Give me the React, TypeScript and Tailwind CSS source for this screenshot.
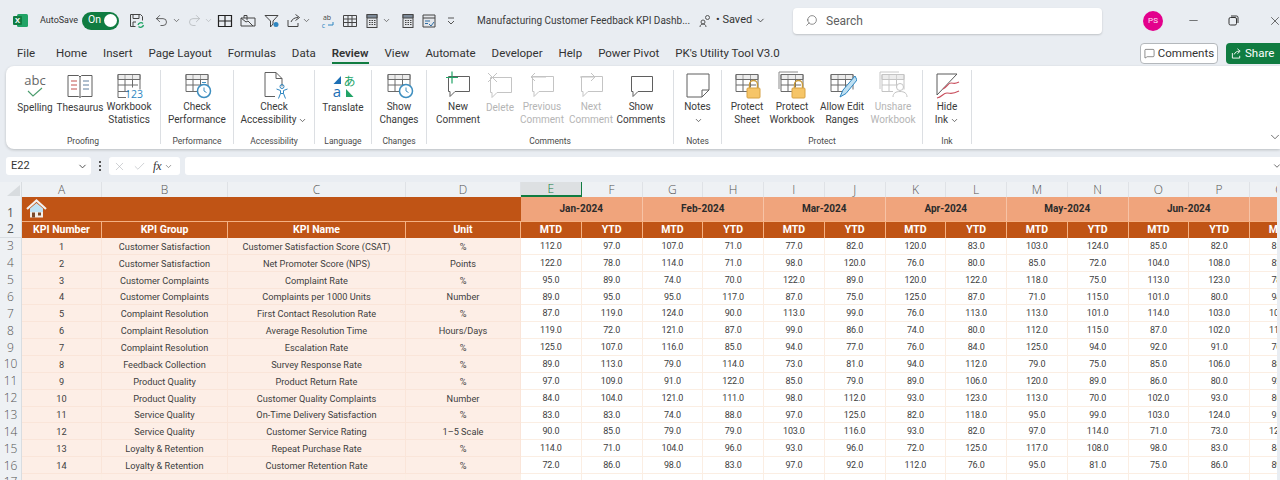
import React from 'react';
import { ChevronDown, Search, Minus, X, Undo2, Redo2, Check, MessageSquare } from 'lucide-react';

const kpis: [number, string, string, string, number[]][] = [
  [1, 'Customer Satisfaction', 'Customer Satisfaction Score (CSAT)', '%', [112, 97, 107, 71, 77, 82, 120, 83, 103, 124, 85, 82, 85]],
  [2, 'Customer Satisfaction', 'Net Promoter Score (NPS)', 'Points', [122, 78, 114, 71, 98, 120, 76, 80, 85, 72, 104, 108, 82]],
  [3, 'Customer Complaints', 'Complaint Rate', '%', [95, 89, 74, 70, 122, 89, 120, 122, 118, 75, 113, 123, 78]],
  [4, 'Customer Complaints', 'Complaints per 1000 Units', 'Number', [89, 95, 95, 117, 87, 75, 125, 87, 71, 115, 101, 80, 94]],
  [5, 'Complaint Resolution', 'First Contact Resolution Rate', '%', [87, 119, 124, 90, 113, 99, 76, 113, 113, 101, 114, 103, 105]],
  [6, 'Complaint Resolution', 'Average Resolution Time', 'Hours/Days', [119, 72, 121, 87, 99, 86, 74, 80, 112, 115, 87, 102, 110]],
  [7, 'Complaint Resolution', 'Escalation Rate', '%', [125, 107, 116, 85, 94, 77, 76, 84, 125, 94, 92, 91, 76]],
  [8, 'Feedback Collection', 'Survey Response Rate', '%', [89, 113, 79, 114, 73, 81, 94, 112, 79, 75, 85, 106, 88]],
  [9, 'Product Quality', 'Product Return Rate', '%', [97, 109, 91, 122, 85, 79, 89, 106, 120, 89, 86, 80, 92]],
  [10, 'Product Quality', 'Customer Quality Complaints', 'Number', [84, 104, 121, 111, 98, 112, 93, 123, 113, 70, 102, 93, 86]],
  [11, 'Service Quality', 'On-Time Delivery Satisfaction', '%', [83, 83, 74, 88, 97, 125, 82, 118, 95, 99, 103, 124, 95]],
  [12, 'Service Quality', 'Customer Service Rating', '1–5 Scale', [90, 85, 79, 79, 103, 116, 93, 82, 97, 114, 71, 73, 120]],
  [13, 'Loyalty & Retention', 'Repeat Purchase Rate', '%', [114, 71, 104, 96, 93, 96, 72, 125, 117, 108, 98, 83, 84]],
  [14, 'Loyalty & Retention', 'Customer Retention Rate', '%', [72, 86, 98, 83, 97, 92, 112, 76, 95, 81, 75, 86, 89]],
];

const letters = ['A', 'B', 'C', 'D', 'E', 'F', 'G', 'H', 'I', 'J', 'K', 'L', 'M', 'N', 'O', 'P', 'Q'];
const months = ['Jan-2024', 'Feb-2024', 'Mar-2024', 'Apr-2024', 'May-2024', 'Jun-2024'];

const Svg = ({ children, size = 30 }: { children: React.ReactNode; size?: number }) => (
  <svg width={size} height={size} viewBox="0 0 30 30" fill="none" stroke="#5f5f5f" strokeWidth="1">
    {children}
  </svg>
);

// little spreadsheet used by most of the ribbon icons
const Sheet = ({ c = '#6b6b6b' }: { c?: string }) => (
  <g stroke={c}>
    <path d="M4 4.500h22v15M4 4.500v17h11" />
    <path d="M4 9.500h22M4 15h20M11 4.500v17M18.500 4.500v13" />
    <path d="M4 4.500h22v5H4z" fill="#d9d9d9" fillOpacity=".5" />
  </g>
);

const Bubble = ({ c = '#5f5f5f' }: { c?: string }) => (
  <path d="M5.500 6.500h21v15H12l-5 5v-5H5.500z" stroke={c} fill="none" />
);

const Lock = () => (
  <g>
    <path d="M17.500 18v-3.500a4 4 0 0 1 8 0V18" stroke="#c99a3a" strokeWidth="1.400" />
    <rect x="15" y="18" width="13" height="10" rx="1" fill="#f6c567" stroke="#d7a244" />
  </g>
);

const Clock = () => (
  <g>
    <circle cx="22" cy="21" r="6.500" fill="#fff" stroke="#3e8ebf" strokeWidth="1.500" />
    <path d="M22 17.500V21l2.500 1.500" stroke="#3e8ebf" />
  </g>
);

const ribbonIcons: Record<string, React.ReactNode> = {
  spelling: (
    <Svg>
      <text x="15" y="14" textAnchor="middle" fontSize="13" fill="#666" stroke="none" fontFamily="Open Sans, sans-serif">abc</text>
      <path d="M8 20l5 5 9-8" stroke="#4a9c6d" strokeWidth="1.100" />
    </Svg>
  ),
  thesaurus: (
    <Svg>
      <path d="M3 4.500h10.500l1.500 1.500 1.500-1.500H27v21H16.500l-1.500 1-1.500-1H3zM15 6v20" />
      <path d="M6 10h6M6 14h6M6 18h6" stroke="#c1504d" />
      <path d="M18 10h6M18 14h6M18 18h6" stroke="#5f7f9e" />
    </Svg>
  ),
  stats: (
    <Svg>
      <Sheet />
      <path d="M4 21.500v6h8" stroke="#6b6b6b" />
      <text x="20" y="28" textAnchor="middle" fontSize="10.500" fill="#2f86c1" stroke="none" fontFamily="Open Sans, sans-serif">123</text>
    </Svg>
  ),
  performance: (
    <Svg>
      <Sheet />
      <Clock />
      <path d="M20 12.500h4" stroke="#3e8ebf" />
    </Svg>
  ),
  accessibility: (
    <Svg>
      <path d="M6 2.500h11l6 6v8M17 2.500v6h6M6 2.500v24h10" />
      <circle cx="23" cy="16.500" r="2" stroke="#2f86c1" />
      <path d="M17.500 19l4 1.500v3l-2 5M28.500 19l-4 1.500v3l2 5M21.500 23.500h3" stroke="#2f86c1" />
    </Svg>
  ),
  translate: (
    <Svg>
      <path d="M13 5v8H5.500z" fill="#1c6fb5" stroke="none" />
      <path d="M18 18v8h7.500z" fill="#21a366" stroke="none" />
      <text x="9" y="26" textAnchor="middle" fontSize="15" fill="#1c6fb5" stroke="none" fontFamily="Open Sans, sans-serif">a</text>
      <text x="21.500" y="15" textAnchor="middle" fontSize="12" fill="#21a366" stroke="none" fontFamily="Noto Sans CJK JP, sans-serif">あ</text>
    </Svg>
  ),
  changes: (
    <Svg>
      <Sheet />
      <Clock />
    </Svg>
  ),
  newComment: (
    <Svg>
      <Bubble />
      <path d="M9 1.500v12M3 7.500h12" stroke="#21a366" strokeWidth="1.200" />
    </Svg>
  ),
  deleteComment: (
    <Svg>
      <Bubble c="#c4c4c4" />
      <path d="M3 2l9 9M12 2l-9 9" stroke="#c4c4c4" />
    </Svg>
  ),
  prevComment: (
    <Svg>
      <Bubble c="#c4c4c4" />
      <path d="M19 7H4M8 3L4 7l4 4" stroke="#c4c4c4" />
    </Svg>
  ),
  nextComment: (
    <Svg>
      <Bubble c="#c4c4c4" />
      <path d="M4 7h15M15 3l4 4-4 4" stroke="#c4c4c4" />
    </Svg>
  ),
  showComments: (
    <Svg>
      <Bubble />
    </Svg>
  ),
  notes: (
    <Svg>
      <path d="M4 4h22v16l-7 7H4zM26 20h-7v7" />
    </Svg>
  ),
  protectSheet: (
    <Svg>
      <Sheet />
      <Lock />
    </Svg>
  ),
  protectBook: (
    <Svg>
      <path d="M2 2h19M2 2v17" stroke="#8b8b8b" />
      <Sheet />
      <Lock />
    </Svg>
  ),
  allowEdit: (
    <Svg>
      <Sheet />
      <path d="M28 6l-12 14-3 7 6-3.500L30 10z" fill="#bfe0f2" stroke="#2f86c1" />
    </Svg>
  ),
  unshare: (
    <Svg>
      <path d="M2 2h19M2 2v17" stroke="#c8c8c8" />
      <Sheet c="#c4c4c4" />
      <circle cx="22" cy="17" r="3.500" fill="#fff" stroke="#c4c4c4" />
      <path d="M15 27c0-4 3-5.500 7-5.500s7 1.500 7 5.500" fill="#fff" stroke="#c4c4c4" />
    </Svg>
  ),
  ink: (
    <Svg>
      <path d="M5 4h20L5 25z" stroke="#5a5a5a" fill="none" />
      <path d="M11 19c4-2 5-6 8-6s3 1.500 8-1" stroke="#c94f5d" strokeWidth="1.200" />
      <path d="M5 28c5-1 6-5 10-5s4 2 12-2" stroke="#c94f5d" strokeWidth="1.200" />
    </Svg>
  ),
};

type Btn = { w: string; icon: string; lines: React.ReactNode[]; off?: boolean; low?: boolean };
type Grp = { label: string; w: string; pl?: string; btns: Btn[] };

const Caret = () => <ChevronDown size={9} strokeWidth={2} className="inline-block ml-[2px] text-[#444]" />;

const groups: Grp[] = [
  {
    label: 'Proofing', w: 'w-[155px]', pl: 'pl-[8px]', btns: [
      { w: 'w-[42px]', icon: 'spelling', lines: ['Spelling'] },
      { w: 'w-[48px]', icon: 'thesaurus', lines: ['Thesaurus'] },
      { w: 'w-[50px]', icon: 'stats', lines: ['Workbook', 'Statistics'] },
    ],
  },
  { label: 'Performance', w: 'w-[73px]', btns: [{ w: 'w-[72px]', icon: 'performance', lines: ['Check', 'Performance'] }] },
  { label: 'Accessibility', w: 'w-[81px]', btns: [{ w: 'w-[80px]', low: true, icon: 'accessibility', lines: ['Check', <>Accessibility<Caret /></>] }] },
  { label: 'Language', w: 'w-[57px]', btns: [{ w: 'w-[56px]', icon: 'translate', lines: ['Translate'] }] },
  { label: 'Changes', w: 'w-[55px]', btns: [{ w: 'w-[54px]', icon: 'changes', lines: ['Show', 'Changes'] }] },
  {
    label: 'Comments', w: 'w-[247px]', pl: 'pl-[5px]', btns: [
      { w: 'w-[52px]', icon: 'newComment', lines: ['New', 'Comment'] },
      { w: 'w-[32px]', icon: 'deleteComment', lines: ['Delete'], off: true },
      { w: 'w-[52px]', icon: 'prevComment', lines: ['Previous', 'Comment'], off: true },
      { w: 'w-[46px]', icon: 'nextComment', lines: ['Next', 'Comment'], off: true },
      { w: 'w-[54px]', icon: 'showComments', lines: ['Show', 'Comments'] },
    ],
  },
  { label: 'Notes', w: 'w-[48px]', btns: [{ w: 'w-[47px]', icon: 'notes', lines: ['Notes', <Caret />] }] },
  {
    label: 'Protect', w: 'w-[201px]', pl: 'pl-[2px]', btns: [
      { w: 'w-[46px]', icon: 'protectSheet', lines: ['Protect', 'Sheet'] },
      { w: 'w-[44px]', icon: 'protectBook', lines: ['Protect', 'Workbook'] },
      { w: 'w-[56px]', icon: 'allowEdit', lines: ['Allow Edit', 'Ranges'] },
      { w: 'w-[46px]', icon: 'unshare', lines: ['Unshare', 'Workbook'], off: true },
    ],
  },
  { label: 'Ink', w: 'w-[49px]', btns: [{ w: 'w-[48px]', low: true, icon: 'ink', lines: ['Hide', <>Ink<Caret /></>] }] },
];

const RibbonGroup = ({ g }: { g: Grp }) => (
  <div className={`${g.w} h-[74px] shrink-0 border-r border-[#dcdfe3] flex flex-col`}>
    <div className={`flex h-[56px] shrink-0 ${g.pl ?? ''}`}>
      {g.btns.map((b) => (
        <div key={b.icon} className={`${b.w} shrink-0 flex flex-col items-center text-center ${b.off ? 'text-[#b5b5b5]' : 'text-[#3a3a3a]'}`}>
          <div className={`${b.low ? 'h-[32px]' : 'h-[31px]'} flex items-center justify-center`}>{ribbonIcons[b.icon]}</div>
          {b.lines.map((l, i) => (
            <div key={i} className="leading-[13px] whitespace-nowrap">{l}</div>
          ))}
        </div>
      ))}
    </div>
    <div className="mt-[9px] text-center text-[8.5px] leading-[13px] text-[#4a4a4a] shrink-0">{g.label}</div>
  </div>
);

const Qat = ({ children, ml }: { children: React.ReactNode; ml: string }) => (
  <div className={`${ml} shrink-0 flex items-center justify-center`}>{children}</div>
);

const Small = ({ children }: { children: React.ReactNode }) => (
  <svg width="16" height="16" viewBox="0 0 16 16" fill="none" stroke="#444" strokeWidth="1">{children}</svg>
);

const Calc = () => (
  <Small>
    <rect x="3" y="1.500" width="10" height="13" fill="#e3e6ea" />
    <path d="M3 1.500h10v3.500H3z" fill="#7d8a99" />
    <path d="M5 7.500h1.500M7.500 7.500H9M10 7.500h1.500M5 9.500h1.500M7.500 9.500H9M10 9.500h1.500M5 11.500h1.500M7.500 11.500H9M10 11.500h1.500" />
  </Small>
);

const TitleBar = () => (
  <div className="h-[41px] shrink-0 flex items-center text-[#333]">
    <svg className="ml-[13px] shrink-0" width="15" height="15" viewBox="0 0 15 15">
      <rect x="4" y="1" width="11" height="13" rx="1.500" fill="#21a366" />
      <rect x="0" y="3" width="9" height="9" rx="1" fill="#107c41" />
      <text x="4.500" y="10" textAnchor="middle" fontSize="7.500" fontWeight="700" fill="#fff" fontFamily="Open Sans, sans-serif">X</text>
    </svg>
    <span className="ml-[12px] w-[37px] shrink-0 text-[9px] whitespace-nowrap">AutoSave</span>
    <div className="ml-[5px] w-[37px] h-[18px] rounded-full bg-[#107c41] flex items-center justify-between pl-[6px] pr-[2px] shrink-0">
      <span className="text-[10.5px] text-white leading-none">On</span>
      <span className="w-[13px] h-[13px] rounded-full bg-white" />
    </div>
    <Qat ml="ml-[10px]">
      <Small>
        <path d="M1.500 1.500h10l2 2v4M1.500 1.500v12h5M4 1.500v4h6v-4M4 13V9h3" />
        <path d="M9 12a3 3 0 0 1 5-1.500M14.500 12a3 3 0 0 1-5 1.500" stroke="#21a366" strokeWidth="1.300" />
      </Small>
    </Qat>
    <Qat ml="ml-[9px]"><Undo2 size={15} strokeWidth={1.3} className="text-[#444]" /></Qat>
    <Qat ml="ml-[3px]"><ChevronDown size={9} className="text-[#555]" /></Qat>
    <Qat ml="ml-[6px]"><Redo2 size={15} strokeWidth={1.3} className="text-[#b5b9bd]" /></Qat>
    <Qat ml="ml-[2px]"><ChevronDown size={9} className="text-[#b5b9bd]" /></Qat>
    <Qat ml="ml-[4px]">
      <Small><path d="M1.500 2.500h13v11h-13zM8 2.500v11M1.500 8h13" stroke="#222" strokeWidth="1.200" /></Small>
    </Qat>
    <Qat ml="ml-[7px]">
      <Small><path d="M1 5h14v8H1zM1 5l5 4 2-1 5 5M4 5V2.500h3V7" /></Small>
    </Qat>
    <Qat ml="ml-[8px]">
      <Small>
        <path d="M1 2.500h13L9 8v3L6.500 14V8z" />
        <circle cx="12" cy="11.500" r="2.500" fill="#2f86c1" stroke="none" />
      </Small>
    </Qat>
    <Qat ml="ml-[6px]">
      <Small><path d="M2 7v6.500h10V10M5 9c1-3 4-4.500 7-4.500M9.500 1.500l4 3-4 3" /></Small>
    </Qat>
    <Qat ml="ml-[0px]"><ChevronDown size={9} className="text-[#555]" /></Qat>
    <Qat ml="ml-[9px]">
      <svg width="15" height="16" viewBox="0 0 15 16">
        <text x="7" y="7" textAnchor="middle" fontSize="7" fill="#444" fontFamily="Open Sans, sans-serif">ab</text>
        <text x="3.500" y="14.500" textAnchor="middle" fontSize="7" fill="#2f86c1" fontFamily="Open Sans, sans-serif">c</text>
        <path d="M8 12h5M13 12V9" stroke="#2f86c1" fill="none" />
      </svg>
    </Qat>
    <Qat ml="ml-[7px]">
      <Small><path d="M1.500 2.500h13v11h-13zM1.500 6h13M1.500 9.500h13M6 2.500v11M10 2.500v11" /></Small>
    </Qat>
    <Qat ml="ml-[6px]"><Calc /></Qat>
    <Qat ml="ml-[2px]"><ChevronDown size={9} className="text-[#555]" /></Qat>
    <Qat ml="ml-[9px]"><Calc /></Qat>
    <Qat ml="ml-[5px]">
      <Small>
        <path d="M2 2h12v12H2zM2 5h12" fill="#e3e6ea" />
        <path d="M4 8h5M4 10.500h3M8 11l2 2 3-4" stroke="#2f6ea5" />
      </Small>
    </Qat>
    <Qat ml="ml-[10px]">
      <svg width="8" height="10" viewBox="0 0 8 10" fill="none" stroke="#555"><path d="M1 2h6M1 5l3 3 3-3" /></svg>
    </Qat>
    <span className="ml-[22px] w-[222px] shrink-0 text-[10px] whitespace-nowrap text-[#3a3a3a]">Manufacturing Customer Feedback KPI Dashb...</span>
    <svg className="shrink-0" width="12" height="14" viewBox="0 0 12 14" fill="none" stroke="#555">
      <circle cx="4" cy="8" r="2" />
      <path d="M1 13c0-2 1.500-3 3-3s3 1 3 3" />
      <circle cx="8.500" cy="3.500" r="2" />
    </svg>
    <span className="ml-[5px] w-[36px] shrink-0 text-[11px] whitespace-nowrap">• Saved</span>
    <ChevronDown size={11} className="ml-[3px] shrink-0 text-[#444]" />
    <div className="ml-[27px] w-[309px] h-[26px] shrink-0 rounded-[4px] bg-white shadow-[0_1px_2px_rgba(0,0,0,0.18)] flex items-center pl-[12px] gap-[8px] text-[#5f5f5f] text-[12px]">
      <Search size={13} strokeWidth={1.3} className="-scale-x-100" />
      <span>Search</span>
    </div>
    <div className="ml-[41px] w-[20px] h-[20px] shrink-0 rounded-full bg-[#e3008c] flex items-center justify-center text-[8px] text-white/90">PS</div>
    <Minus size={13} strokeWidth={1.2} className="ml-[24px] shrink-0 text-[#333]" />
    <svg className="ml-[28px] shrink-0" width="11" height="11" viewBox="0 0 11 11" fill="none" stroke="#333">
      <rect x="1" y="2.500" width="7.500" height="7.500" rx="1.500" />
      <path d="M3 1h5.500A1.500 1.500 0 0 1 10 2.500V8" />
    </svg>
    <X size={14} strokeWidth={1.2} className="ml-[29px] shrink-0 text-[#333]" />
  </div>
);

const TabRow = () => (
  <div className="h-[25px] shrink-0 flex items-start pl-[17px] text-[11.5px] text-[#333]">
    <span className="mt-[4px] mr-[21px]">File</span>
    <div className="flex gap-[16px]">
      {['Home', 'Insert', 'Page Layout', 'Formulas', 'Data', 'Review', 'View', 'Automate', 'Developer', 'Help', 'Power Pivot', "PK's Utility Tool V3.0"].map((t) => (
        <span key={t} className={`h-[23px] pt-[4px] whitespace-nowrap ${t === 'Review' ? 'font-semibold border-b-[2px] border-[#107c41]' : ''}`}>{t}</span>
      ))}
    </div>
    <div className="ml-auto mt-[2px] w-[78px] h-[21px] shrink-0 rounded-[4px] bg-white border border-[#b4b8bc] flex items-center justify-center gap-[3px] text-[11.5px]">
      <MessageSquare size={11} strokeWidth={1.2} />
      Comments
    </div>
    <div className="ml-[8px] mt-[2px] w-[54px] h-[21px] shrink-0 rounded-l-[4px] bg-[#107c41] flex items-center pl-[5px] gap-[3px] text-[11.5px] text-white">
      <svg width="11" height="11" viewBox="0 0 12 12" fill="none" stroke="#fff">
        <path d="M1.500 5.500v5.500h8V8.500M3.500 7c1-2.500 3-3.500 5.500-3.500M7 .8l3 2.700-3 2.700" />
      </svg>
      Share
    </div>
  </div>
);

const Ribbon = () => (
  <div className="ml-[6px] h-[83px] shrink-0 rounded-l-[8px] bg-white shadow-[0_1px_3px_rgba(0,0,0,0.2)] flex pt-[4px] text-[10px] relative">
    {groups.map((g) => <RibbonGroup key={g.label} g={g} />)}
    <ChevronDown size={14} strokeWidth={1.3} className="absolute right-[-2px] bottom-[5px] text-[#444]" />
  </div>
);

const FormulaBar = () => (
  <div className="mt-[8px] mb-[7px] h-[18px] shrink-0 flex items-stretch pl-[6px]">
    <div className="w-[85px] rounded-[3px] bg-white flex items-center justify-between pl-[5px] pr-[3px] text-[11px] text-[#333]">
      E22
      <ChevronDown size={11} className="text-[#444]" />
    </div>
    <div className="w-[18px] flex flex-col items-center justify-center gap-[2px]">
      <span className="w-[2px] h-[2px] bg-[#555]" />
      <span className="w-[2px] h-[2px] bg-[#555]" />
      <span className="w-[2px] h-[2px] bg-[#555]" />
    </div>
    <div className="w-[71px] rounded-[3px] bg-white flex items-center pl-[4px] text-[#a8acb0]">
      <X size={13} strokeWidth={1} />
      <Check size={13} strokeWidth={1} className="ml-[7px]" />
      <span className="ml-[7px] text-[12px] leading-none italic font-['Liberation_Serif',serif] text-[#333]">fx</span>
      <ChevronDown size={9} className="ml-[2px] text-[#777]" />
    </div>
    <div className="ml-[5px] flex-1 rounded-l-[3px] bg-white flex items-center justify-end">
      <ChevronDown size={10} className="text-[#555] -mr-[2px]" />
    </div>
  </div>
);

const House = () => (
  <svg width="21" height="20" viewBox="0 0 21 20">
    <path d="M4 9.500L10.500 4 17 9.500V18H4z" fill="#bfe3f5" />
    <path d="M1 10L10.500 1.500 20 10" fill="none" stroke="#f1f1f1" strokeWidth="2.200" />
    <path d="M4 13h13v5.500H4z" fill="#f4efe8" />
    <rect x="6" y="13.500" width="3" height="5" fill="#7a4a2b" />
    <rect x="12" y="13.500" width="3" height="3" fill="#7a4a2b" />
  </svg>
);

const Grid = () => (
  <div className="w-[1277px] overflow-hidden">
    <div className="grid w-max grid-cols-[22px_80px_126px_178px_115px_repeat(13,60.75px)] grid-rows-[15px_24px_17px] auto-rows-[16.87px] text-[9.2px] leading-none text-[#404040]">
      {/* column letters */}
      <div className="bg-[#eef1f4] flex items-end justify-end pr-[1px] pb-[1px] border-r border-[#d9dde1]">
        <svg width="13" height="11" viewBox="0 0 13 11"><path d="M13 0v11H0z" fill="#d8dcdf" /></svg>
      </div>
      {letters.map((l) => (
        <div key={l} className={`flex items-center justify-center text-[12px] leading-none font-['Open_Sans',sans-serif] font-light border-r ${l === 'E' ? 'bg-[#dde0e2] border-b-2 border-[#107c41] text-[#107c41]' : 'bg-[#eef1f4] border-[#dfe2e6] text-[#555]'}`}>{l}</div>
      ))}

      {/* row 1 */}
      <div className="bg-[#eef1f4] flex items-end justify-center pb-[2px] text-[12px] leading-none font-['Open_Sans',sans-serif] text-[#555] border-r border-[#d9dde1]">1</div>
      <div className="col-span-4 bg-[#c05415] pl-[4px] flex items-center"><House /></div>
      {months.map((m) => (
        <div key={m} className="col-span-2 bg-[#f0a47c] border-r border-[#f7c3a6] flex items-center justify-center font-bold text-[10px] leading-none text-[#2b2b2b]">{m}</div>
      ))}
      <div className="bg-[#f0a47c]" />

      {/* row 2 */}
      <div className="bg-[#eef1f4] flex items-center justify-center text-[12px] leading-none font-['Open_Sans',sans-serif] text-[#555] border-r border-[#d9dde1] border-b">2</div>
      {['KPI Number', 'KPI Group', 'KPI Name', 'Unit'].map((h) => (
        <div key={h} className="bg-[#c05415] border-t border-r border-[#f4b183] flex items-center justify-center font-bold text-[10.5px] leading-none text-white">{h}</div>
      ))}
      {letters.slice(4).map((l, i) => (
        <div key={l} className="bg-[#c05415] border-t border-r border-[#f4b183] flex items-center justify-center font-bold text-[10.5px] leading-none text-white">{i % 2 === 0 ? 'MTD' : 'YTD'}</div>
      ))}

      {/* data rows */}
      {kpis.map(([n, group, name, unit, vals], r) => (
        <React.Fragment key={n}>
          <div className="bg-[#eef1f4] flex items-center justify-center text-[12px] leading-none font-['Open_Sans',sans-serif] font-light text-[#555] border-r border-[#d9dde1]">{r + 3}</div>
          {[n, group, name, unit].map((c, i) => (
            <div key={i} className="bg-[#fdeee6] border-r border-b border-[#fae5d9] pt-px flex items-center justify-center whitespace-nowrap">{c}</div>
          ))}
          {vals.map((v, i) => (
            <div key={i} className="bg-white border-r border-b border-[#fbeee3] pt-px flex items-center justify-center text-[9px] tracking-[-0.2px]">{v.toFixed(1)}</div>
          ))}
        </React.Fragment>
      ))}

      {/* row 17 */}
      <div className="bg-[#eef1f4] flex items-center justify-center text-[12px] leading-none font-['Open_Sans',sans-serif] font-light text-[#555] border-r border-[#d9dde1]">17</div>
      {letters.map((l, i) => (
        <div key={l} className={`border-r border-[#fbeee3] ${i < 4 ? 'bg-[#fdeee6]' : 'bg-white'}`} />
      ))}
    </div>
  </div>
);

export default function App() {
  return (
    <div className="w-[1280px] h-[480px] overflow-hidden bg-[#e9edf2] flex flex-col font-['Roboto',sans-serif]">
      <TitleBar />
      <TabRow />
      <Ribbon />
      <FormulaBar />
      <Grid />
    </div>
  );
}
